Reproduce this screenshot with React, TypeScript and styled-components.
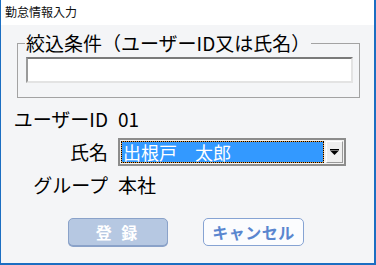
import styled, { createGlobalStyle } from "styled-components";

const GlobalStyle = createGlobalStyle`
  html, body {
    margin: 0;
    padding: 0;
    background: #ffffff;
  }
  * {
    box-sizing: border-box;
  }
`;

const FONT = `"Noto Sans CJK JP", "Noto Sans", sans-serif`;

const App = (): JSX.Element => {
  return (
    <>
      <GlobalStyle />
      <Window>
        <TitleBar>勤怠情報入力</TitleBar>
        <Content>
          <FilterBox>
            <legend>絞込条件（ユーザーID又は氏名）</legend>
            <FilterInput type="text" />
          </FilterBox>

          <FormGrid>
            <Label>ユーザーID</Label>
            <Value>01</Value>

            <Label>氏名</Label>
            <SelectFrame>
              <SelectValue>出根戸　太郎</SelectValue>
              <DropButton>
                <svg width="9" height="6" viewBox="0 0 9 6">
                  <rect x="0" y="0" width="9" height="1.5" fill="#000" />
                  <polygon points="0.5,2 8.5,2 4.5,6" fill="#000" />
                </svg>
              </DropButton>
            </SelectFrame>

            <Label>グループ</Label>
            <Value>本社</Value>
          </FormGrid>

          <ButtonRow>
            <ActionButton $primary>登 録</ActionButton>
            <ActionButton>キャンセル</ActionButton>
          </ButtonRow>
        </Content>
      </Window>
    </>
  );
};

export default App;

const Window = styled.div`
  width: 376px;
  height: 265px;
  display: flex;
  flex-direction: column;
  background: #f4f5f7;
  border-left: 1px solid #1b6ec2;
  border-right: 2px solid #1b6ec2;
  border-bottom: 2px solid #1b6ec2;
  font-family: ${FONT};
  color: #000;
`;

const TitleBar = styled.div`
  height: 25px;
  background: #ffffff;
  padding: 4px 0 0 4px;
  font-size: 12px;
  line-height: 16px;
  color: #111;
`;

const Content = styled.div`
  flex: 1;
  display: flex;
  flex-direction: column;
  padding-top: 8px;
`;

const FilterBox = styled.fieldset`
  margin: 0 14px 0 16px;
  padding: 4px 6px 14px 8px;
  border: 1px solid #a3a3a3;
  min-width: 0;

  legend {
    padding: 0 1px;
    margin-left: -1px;
    font-size: 19px;
    line-height: 20px;
    color: #000;
  }
`;

const FilterInput = styled.input`
  display: block;
  width: 100%;
  height: 26px;
  margin: 0;
  padding: 0 4px;
  background: #ffffff;
  border-top: 2px solid #7a7a7a;
  border-left: 2px solid #9a9a9a;
  border-right: 2px solid #e3e3e3;
  border-bottom: 2px solid #e3e3e3;
  outline: none;
  font-family: ${FONT};
  font-size: 16px;
`;

const FormGrid = styled.div`
  display: grid;
  grid-template-columns: 107px 1fr;
  grid-auto-rows: 33px;
  column-gap: 10px;
  align-items: center;
  margin-top: 4px;
  padding-right: 28px;
`;

const Label = styled.div`
  text-align: right;
  font-size: 19px;
  line-height: 22px;
  white-space: nowrap;
`;

const Value = styled.div`
  font-size: 19px;
  line-height: 22px;
`;

const SelectFrame = styled.div`
  height: 28px;
  display: flex;
  align-items: stretch;
  gap: 2px;
  padding: 1px;
  background: #f2f2f2;
  border: 2px solid #8c8c8c;
`;

const SelectValue = styled.div`
  flex: 1;
  display: flex;
  align-items: center;
  padding-left: 1px;
  border: 1px dotted #000;
  background: linear-gradient(#3399ff, #3399ff) padding-box, #e89a3c border-box;
  color: #ffffff;
  font-size: 18px;
  line-height: 20px;
  white-space: nowrap;
`;

const DropButton = styled.div`
  width: 17px;
  display: flex;
  align-items: center;
  justify-content: center;
  background: #efefef;
  border-top: 1px solid #ffffff;
  border-left: 1px solid #ffffff;
  border-right: 1px solid #9a9a9a;
  border-bottom: 1px solid #9a9a9a;
`;

const ButtonRow = styled.div`
  display: flex;
  gap: 35px;
  margin-top: 17px;
  padding-left: 67px;
`;

const ActionButton = styled.button<{ $primary?: boolean }>`
  width: ${(p) => (p.$primary ? "100px" : "101px")};
  height: 28px;
  margin: 0;
  padding: 0;
  border-radius: 5px;
  border: 1px solid ${(p) => (p.$primary ? "#8aa2c9" : "#86a3d3")};
  background: ${(p) => (p.$primary ? "#b6c8e2" : "#fbfcfe")};
  color: ${(p) => (p.$primary ? "#ffffff" : "#5a86cf")};
  font-family: ${FONT};
  font-size: 16px;
  font-weight: 700;
  letter-spacing: ${(p) => (p.$primary ? "3px" : "0.5px")};
  line-height: 20px;
  box-shadow: ${(p) => (p.$primary ? "0 1px 0 #8aa2c9" : "none")};
`;
